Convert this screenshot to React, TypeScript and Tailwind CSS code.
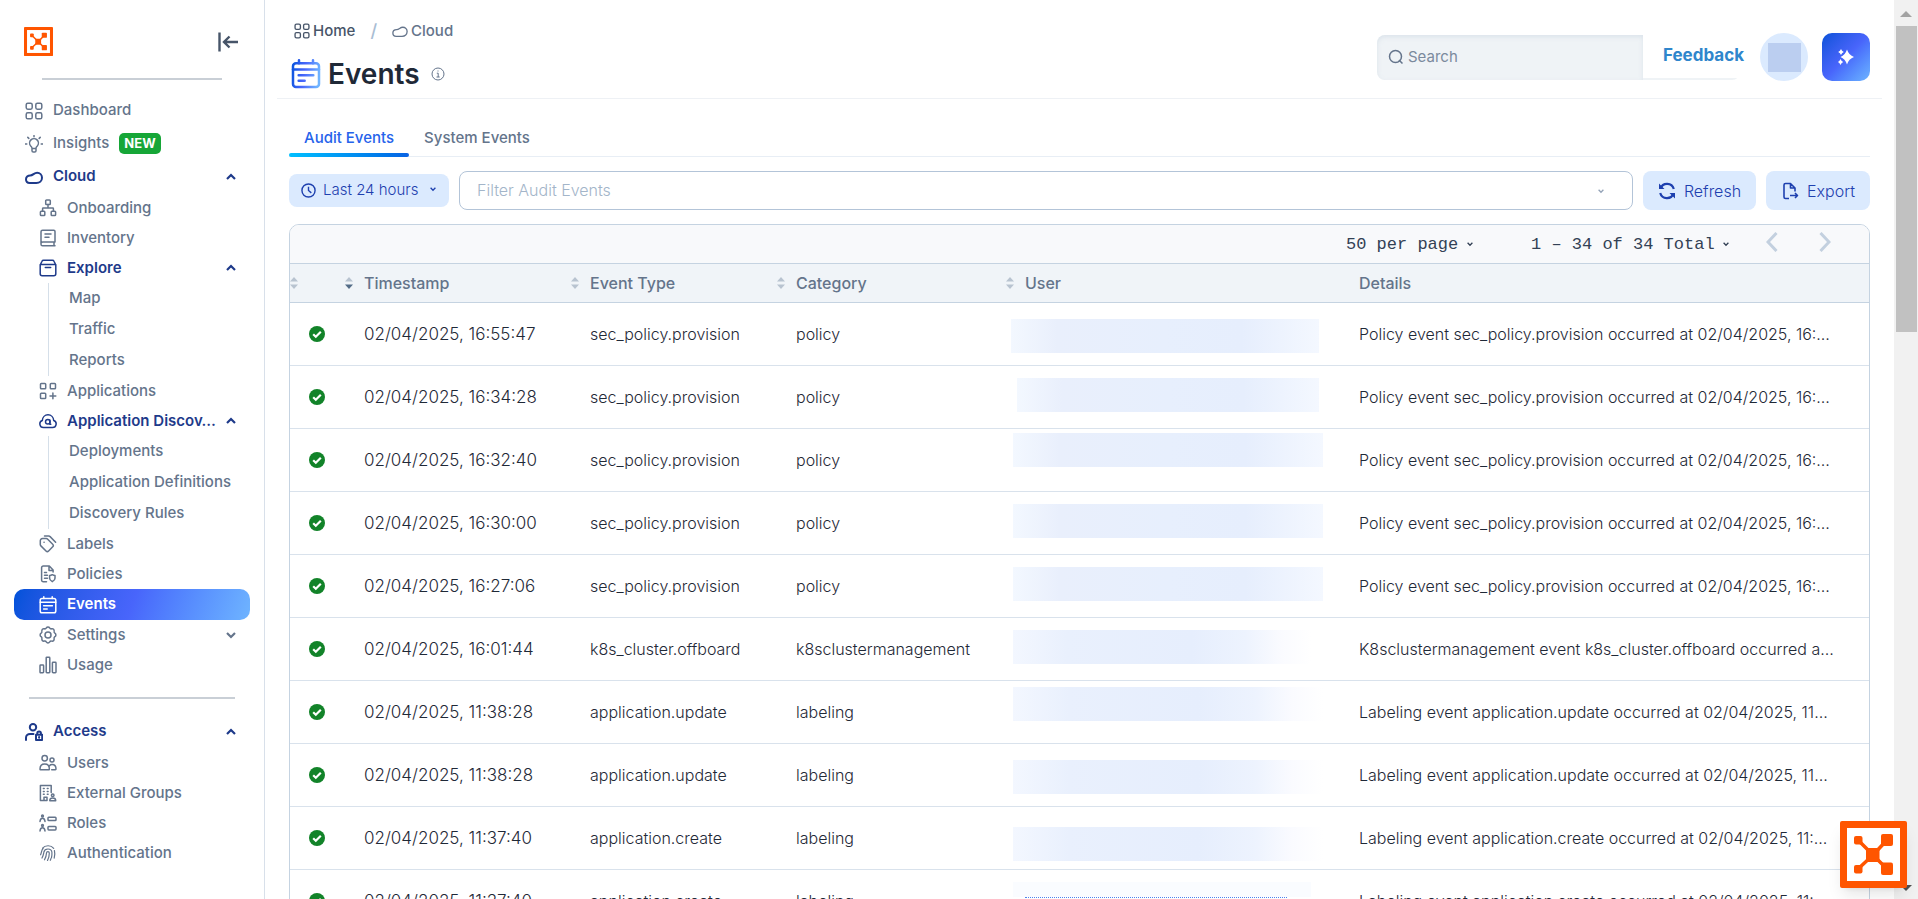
import { useState, type ReactNode } from "react";
import { clsx } from "clsx";

const ICONS: Record<string, ReactNode> = {
  dashboard: (
    <>
      <rect x="1.2" y="1.2" width="6" height="6" rx="1.6" />
      <rect x="10.8" y="1.2" width="6" height="6" rx="1.6" />
      <rect x="1.2" y="10.8" width="6" height="6" rx="1.6" />
      <rect x="10.8" y="10.8" width="6" height="6" rx="1.6" />
    </>
  ),
  insights: (
    <>
      <path d="M7 13.3c0-1.2-.6-1.6-1.3-2.3a4.4 4.4 0 1 1 6.6 0c-.7.7-1.3 1.1-1.3 2.3v2.4a1.3 1.3 0 0 1-1.3 1.3H8.3A1.3 1.3 0 0 1 7 15.7zM7 13.5h4" />
      <path d="M9 .6v1.2M2.8 2.4l1 1M15.2 2.4l-1 1M.4 9h1.4M16.2 9h1.4" />
    </>
  ),
  cloud: (
    <path d="M4.7 15h6.6c3.3 0 5.7-2.3 5.7-5.3 0-2.8-2.2-4.9-4.9-4.9-3.2 0-3.9 2.7-6.9 2.7C2.7 7.5 1 9 1 11.3 1 13.5 2.6 15 4.7 15z" />
  ),
  onboarding: (
    <>
      <rect x="6.7" y="1" width="4.6" height="4.6" rx=".8" />
      <rect x="1.4" y="12.2" width="4.4" height="4.4" rx=".8" />
      <rect x="12.2" y="12.2" width="4.4" height="4.4" rx=".8" />
      <path d="M9 5.6V9M3.6 12V9.6c0-.4.2-.6.6-.6h9.6c.4 0 .6.2.6.6V12" />
    </>
  ),
  inventory: (
    <>
      <path d="M16 13V2.4c0-.8-.5-1.2-1.2-1.2H3.6C2.6 1.2 2 1.8 2 2.8v12.4c0 1 .7 1.6 1.6 1.6H16M16 13H3.8C2.7 13 2 13.8 2 14.8M15 13v3.8" />
      <path d="M6 5h6M6 8.2h4" />
    </>
  ),
  explore: (
    <path d="M1.2 6 3 2.2c.3-.7.8-1 1.5-1h9c.7 0 1.2.3 1.5 1L16.8 6v8.8c0 1.2-.8 2-2 2H3.2c-1.2 0-2-.8-2-2zM1.2 5.6h15.6M6.3 8.5h5.4" />
  ),
  applications: (
    <>
      <rect x="1.5" y="1.5" width="5.2" height="5.2" rx=".8" />
      <rect x="11.3" y="1.5" width="5.2" height="5.2" rx=".8" />
      <rect x="1.5" y="11.3" width="5.2" height="5.2" rx=".8" />
      <path d="M13.9 11v5.8M11 13.9h5.8" />
    </>
  ),
  discovery: (
    <>
      <path d="M4.6 15.5h8.8a3.6 3.6 0 0 0 1.3-7c-.2-3.3-2.6-5.7-5.7-5.7S3.5 5.2 3.3 8.5a3.6 3.6 0 0 0 1.3 7z" />
      <circle cx="8.8" cy="9.7" r="2.3" />
      <path d="M10.8 8v4.3h1" />
    </>
  ),
  labels: (
    <>
      <path d="M1.3 5.8c0-1.4.8-2.2 2.2-2.2h3.8c.6 0 1 .2 1.4.6l5 5c.8.8.8 1.8 0 2.6L9.6 16c-.8.8-1.8.8-2.6 0L1.9 10.9c-.4-.4-.6-.8-.6-1.4zM5.5 1h4.2c.6 0 1 .2 1.4.6l5.5 5.6" />
      <path d="M5 7.3h.1" />
    </>
  ),
  policies: (
    <>
      <path d="M7.5 16.7H4.3c-1 0-1.7-.7-1.7-1.7V2.8c0-1 .7-1.7 1.7-1.7h6l3.8 3.900v2M10 1.3V5.4h4M5.5 7.4h2M5.5 10.3h3M5.5 13.3h3" />
      <path d="M10.6 10.6c1.2 0 1.8-.3 2.7-.9.9.6 1.5.9 2.7.9v2.7c0 1.6-1.2 2.6-2.7 3.4-1.5-.8-2.7-1.8-2.7-3.4z" />
    </>
  ),
  events: (
    <>
      <rect x="1.2" y="2.5" width="15.6" height="14.3" rx="1.8" />
      <path d="M1.2 6.3h15.6M4.8.8v1.7M13.2.8v1.7M4.6 9.7h8.8M4.6 13h3.6" />
    </>
  ),
  settings: (
    <>
      <path d="M7.3 2c.8-1.3 2.6-1.3 3.4 0 .4.7 1.2 1 2 .8 1.5-.4 2.7.9 2.4 2.4-.2.8.2 1.5.8 2 1.3.8 1.3 2.7 0 3.5-.6.5-1 1.2-.8 2 .3 1.5-.9 2.8-2.4 2.4-.8-.2-1.6.1-2 .8-.8 1.3-2.6 1.3-3.4 0-.4-.7-1.2-1-2-.8-1.5.4-2.7-.9-2.4-2.4.2-.8-.2-1.5-.8-2-1.3-.8-1.3-2.7 0-3.5.6-.5 1-1.2.8-2-.3-1.5.9-2.8 2.4-2.4.8.2 1.6-.1 2-.8z" />
      <circle cx="9" cy="9" r="3" />
    </>
  ),
  usage: (
    <>
      <rect x="1" y="9" width="3.6" height="7.8" rx=".7" />
      <rect x="7.2" y="1.2" width="3.6" height="15.6" rx=".7" />
      <rect x="13.4" y="6.2" width="3.6" height="10.6" rx=".7" />
    </>
  ),
  access: (
    <>
      <circle cx="8" cy="4.2" r="3.2" />
      <path d="M1 17v-2.2C1 12.6 2.8 11 5 11h3.5" />
      <path d="M11 11.7h6.2v5.2H11zM12.3 11.5v-1.2c0-2.4 3.6-2.4 3.6 0v1.2M14.1 14v.8" />
    </>
  ),
  users: (
    <>
      <circle cx="5.7" cy="4.2" r="2.7" />
      <circle cx="13" cy="6" r="2" />
      <path d="M1 15.2c0-3.2 1.8-5.2 4.7-5.2s4.7 2 4.7 5.2c0 .3-.2.5-.5.5H1.5c-.3 0-.5-.2-.5-.5zM10.5 11.8c.7-.9 1.6-1.2 2.6-1.2 2.4 0 3.9 1.7 3.9 4.4 0 .4-.2.7-.6.7h-3.7" />
    </>
  ),
  groups: (
    <>
      <path d="M8 16.6H1.4V1.4h10.8v7.2M5 16.5v-3.3h3v3.3M4.4 4.6h.8M4.4 7.4h.8M4.4 10.2h.8M8.3 4.6h.8M8.3 7.4h.8M8.3 10.2h.8" />
      <circle cx="13.7" cy="11.2" r="1.3" />
      <path d="M10.8 16.7c0-1.8 1-2.7 2.9-2.7s3 .9 3 2.7z" />
    </>
  ),
  roles: (
    <>
      <circle cx="3.5" cy="2" r=".9" />
      <path d="M1 7.5c.2-2.5 1-3.2 2.5-3.2S5.8 5 6 7.5" />
      <rect x="9" y="3.2" width="8" height="3.4" rx=".8" />
      <circle cx="3.5" cy="11.5" r=".9" />
      <path d="M1 17c.2-2.5 1-3.2 2.5-3.2S5.8 14.5 6 17" />
      <rect x="9" y="12.5" width="8" height="3.4" rx=".8" />
    </>
  ),
  authentication: (
    <g strokeWidth="1.2">
      <path d="M3.6 4.2C6 1 12 .8 14.7 4.3M1.6 10.8C2.8 8 2.4 5.8 4.2 4.6M3 14c1.7-3 1.6-4.6 1.9-6 .8-4 7.5-4 8 .2.1 1.6.1 3.4-.4 5.4M5.5 15.8c1.3-2.4 1.9-4.5 2-6.8.1-1.8 2.7-1.8 2.8.1.1 2.5-.7 5-1.8 7.4M11.3 16.3c.3-.7.6-1.4.8-2.2M15.4 6.5c.7 2.6.5 5-.2 7.6" />
    </g>
  ),
};

const Icon = ({
  name,
  className,
  stroke = "currentColor",
  bold = false,
}: {
  name: string;
  className?: string;
  stroke?: string;
  bold?: boolean;
}) => (
  <svg
    viewBox="0 0 18 18"
    fill="none"
    stroke={stroke}
    strokeWidth={bold ? 2 : 1.5}
    strokeLinecap="round"
    strokeLinejoin="round"
    aria-hidden="true"
    className={clsx("shrink-0", className)}
  >
    {ICONS[name]}
  </svg>
);

const Chevron = ({
  up = false,
  className,
}: {
  up?: boolean;
  className?: string;
}) => (
  <svg
    viewBox="0 0 10 10"
    fill="none"
    stroke="currentColor"
    strokeWidth="2.2"
    aria-hidden="true"
    className={clsx("shrink-0 pointer-events-none", className)}
  >
    <path d={up ? "M1 7l4-4 4 4" : "M1 3l4 4 4-4"} />
  </svg>
);

const Logo = ({ className }: { className?: string }) => (
  <svg viewBox="0 0 67 67" className={className} aria-hidden="true">
    <rect width="67" height="67" rx="2" fill="#ff5500" />
    <rect x="7" y="7" width="53" height="53" fill="#fff" />
    <path
      d="M18 19l15 15M47 19L33 34M18 48l15-14M47 48L33 34"
      stroke="#ff5500"
      strokeWidth="3.5"
    />
    <g fill="#ff5500">
      <rect x="26" y="27" width="13.5" height="14" rx="1" />
      <rect x="14" y="15" width="8.5" height="8.5" rx="2" />
      <rect x="41" y="13" width="12" height="12" rx="2" />
      <rect x="14" y="44" width="8.5" height="8.5" rx="2" />
      <rect x="41" y="41.5" width="12" height="12.5" rx="2" />
    </g>
  </svg>
);

const NavItem = ({
  name,
  icon,
  top = false,
  isOpen,
  isActive = false,
  badge,
}: {
  name: string;
  icon: string;
  top?: boolean;
  isOpen?: boolean;
  isActive?: boolean;
  badge?: string;
}) => (
  <a
    href="#"
    className={clsx(
      "flex items-center gap-[10px] rounded-[10px] pr-[14px]",
      top ? "h-[33px] pl-[11px]" : "pl-[25px]",
      !top && (isActive ? "h-[31px]" : "h-[30px]"),
      isActive &&
        "bg-linear-110 from-[#0052d9] via-[#4865fb] to-[#6fb4ff] text-white font-semibold",
      !isActive && isOpen && "text-[#1e3a8a] font-semibold",
      !isActive && !isOpen && "text-[#64748b] font-medium"
    )}
  >
    <Icon name={icon} bold={top && isOpen} className="size-[18px]" />
    <span className="whitespace-nowrap">{name}</span>
    {badge && (
      <span className="flex h-[21px] items-center rounded-[5px] bg-[#16a637] px-[5px] text-[13px] font-bold text-white">
        {badge}
      </span>
    )}
    {isOpen !== undefined && (
      <Chevron up={isOpen} className="ml-auto size-[10px]" />
    )}
  </a>
);

const NavChildren = ({ items }: { items: string[] }) => (
  <ul className="ml-[34px] border-l border-[#d5dfe9]">
    {items.map((item) => (
      <li key={item}>
        <a
          href="#"
          className="flex h-[31px] items-center whitespace-nowrap pl-[20px] font-medium text-[#64748b]"
        >
          {item}
        </a>
      </li>
    ))}
  </ul>
);

const Sidebar = () => (
  <nav className="w-[265px] shrink-0 border-r border-[#d8e0ea] px-[14px] text-[15px]">
    <div className="flex h-[78px] items-center justify-between pl-[10px] pr-[12px] pt-[5px]">
      <Logo className="size-[29px]" />
      <button aria-label="Collapse menu" className="text-[#475569]">
        <svg
          viewBox="0 0 20 20"
          fill="none"
          stroke="currentColor"
          strokeWidth="2.4"
          className="size-5"
        >
          <path d="M1.5 .5v19M6 10h14M11.5 4.5L6 10l5.5 5.5" />
        </svg>
      </button>
    </div>
    <hr className="mx-[28px] mb-[14px] h-[2px] border-0 bg-[#c9cfd6]" />
    <NavItem top icon="dashboard" name="Dashboard" />
    <NavItem top icon="insights" name="Insights" badge="NEW" />
    <NavItem top icon="cloud" name="Cloud" isOpen />
    <NavItem icon="onboarding" name="Onboarding" />
    <NavItem icon="inventory" name="Inventory" />
    <NavItem icon="explore" name="Explore" isOpen />
    <NavChildren items={["Map", "Traffic", "Reports"]} />
    <NavItem icon="applications" name="Applications" />
    <NavItem icon="discovery" name="Application Discov…" isOpen />
    <NavChildren
      items={["Deployments", "Application Definitions", "Discovery Rules"]}
    />
    <NavItem icon="labels" name="Labels" />
    <NavItem icon="policies" name="Policies" />
    <NavItem icon="events" name="Events" isActive />
    <NavItem icon="settings" name="Settings" isOpen={false} />
    <NavItem icon="usage" name="Usage" />
    <hr className="mx-[15px] mt-[17px] mb-4 h-[2px] border-0 bg-[#c9cfd6]" />
    <NavItem top icon="access" name="Access" isOpen />
    <NavItem icon="users" name="Users" />
    <NavItem icon="groups" name="External Groups" />
    <NavItem icon="roles" name="Roles" />
    <NavItem icon="authentication" name="Authentication" />
  </nav>
);

const Header = () => (
  <header className="flex justify-between border-b border-[#eef1f5] pr-[12px] pl-[14px] h-[99px]">
    <div>
      <div className="flex items-center pl-[3px] pt-[19px] text-[15px] leading-6 font-medium">
        <a href="#" className="flex items-center gap-[3px] text-[#475569]">
          <Icon name="dashboard" className="size-4" />
          Home
        </a>
        <span className="mx-[15px] text-lg leading-6 text-[#a9bdd3]">/</span>
        <a href="#" className="flex items-center gap-[3px] text-[#64748b]">
          <Icon name="cloud" className="size-4" />
          Cloud
        </a>
      </div>
      <div className="mt-[11px] flex h-10 items-center">
        <svg width="0" height="0" aria-hidden="true">
          <linearGradient
            id="title"
            gradientUnits="userSpaceOnUse"
            x1="0"
            y1="0"
            x2="18"
            y2="3"
          >
            <stop stopColor="#0052d9" />
            <stop offset=".5" stopColor="#4865fb" />
            <stop offset="1" stopColor="#6fb4ff" />
          </linearGradient>
        </svg>
        <Icon name="events" stroke="url(#title)" className="size-[30px]" />
        <h1 className="ml-[7px] text-[28px] font-semibold text-[#1f2937]">
          Events
        </h1>
        <button
          aria-label="About this page"
          className="ml-[11px] text-[#64748b]"
        >
          <svg
            viewBox="0 0 14 14"
            fill="none"
            stroke="currentColor"
            className="size-[14px]"
          >
            <circle cx="7" cy="7" r="6" />
            <path d="M5.8 6.2h1.4v3.8M5.5 10h3.2M6.5 4h1" />
          </svg>
        </button>
      </div>
    </div>

    <div className="flex h-12 items-center mt-[33px]">
      <div className="flex h-[45px] w-[363px] rounded-lg bg-[#eff3f6]">
        <label className="flex w-[266px] shrink-0 items-center gap-1 rounded-l-lg pl-[11px] text-[#64748b] inset-shadow-sm inset-shadow-slate-300/50">
          <svg
            viewBox="0 0 16 16"
            fill="none"
            stroke="currentColor"
            strokeWidth="1.5"
            className="size-4 shrink-0"
          >
            <circle cx="7.5" cy="7.5" r="6" />
            <path d="M11 11l3.5 3.5" />
          </svg>
          <input
            type="search"
            placeholder="Search"
            aria-label="Search"
            className="w-full bg-transparent text-[15px] outline-none placeholder:text-[#7b8a9d]"
          />
        </label>
        <div className="flex h-[43px] grow items-center bg-white pl-[20px]">
          <a href="#" className="text-[17px] font-bold text-[#2f86cc]">
            Feedback
          </a>
        </div>
      </div>
      <button
        aria-label="Account"
        className="ml-5 flex size-12 items-center justify-center rounded-full bg-[#dbeafe]"
      >
        <span className="h-[29px] w-[33px] bg-[#bbcef0]" />
      </button>
      <button
        aria-label="Assistant"
        className="ml-[14px] flex size-12 items-center justify-center rounded-[10px] bg-linear-135 from-[#0052d9] via-[#4865fb] to-[#6fb4ff] text-white"
      >
        <svg viewBox="0 0 16 16" fill="currentColor" className="size-4">
          <path d="M9 .5Q10.8 6.2 16 8 10.8 9.800 9 15.5 7.200 9.800 2.500 8 7.200 6.200 9 .5z" />
          <path d="M3 0q.7 2.200 2.800 3-2.100.8-2.800 3Q2.300 3.800.2 3 2.300 2.200 3 0zM2.500 10q.7 2.200 2.700 3-2 .8-2.700 3-.7-2.200-2.500-3Q1.800 12.200 2.500 10z" />
        </svg>
      </button>
    </div>
  </header>
);

const TABS = ["Audit Events", "System Events"];

const Tabs = () => {
  const [tab, setTab] = useState(TABS[0]);

  return (
    <div role="tablist" className="flex border-b border-[#e8eef5]">
      {TABS.map((name) => (
        <button
          key={name}
          role="tab"
          aria-selected={tab === name}
          onClick={() => setTab(name)}
          className={clsx(
            "-mb-px flex flex-col text-[15px] font-medium",
            tab === name ? "text-[#2563eb]" : "text-[#64748b]"
          )}
        >
          <span className="px-[15px] pb-[3px] leading-6">{name}</span>
          <span
            className={clsx(
              "h-1 w-full rounded-full",
              tab === name && "bg-linear-to-r from-[#00bfff] to-[#0b62e3]"
            )}
          />
        </button>
      ))}
    </div>
  );
};

const Filters = () => (
  <div className="mt-[14px] flex items-center gap-[10px] text-[16px] font-light text-[#1e40af]">
    <label className="flex h-[33px] w-[160px] shrink-0 items-center rounded-lg bg-[#dbeafe] pl-3">
      <svg
        viewBox="0 0 16 16"
        fill="none"
        stroke="currentColor"
        strokeWidth="1.5"
        className="size-[15px] shrink-0"
      >
        <circle cx="8" cy="8" r="7" />
        <path d="M8 4v4l3 2.5" />
      </svg>
      <select
        aria-label="Time range"
        className="ml-[7px] w-[98px] appearance-none text-[15px] outline-none"
      >
        <option>Last 24 hours</option>
      </select>
      <Chevron className="mb-[3px] ml-[9px] size-[6px]" />
    </label>
    <div className="flex h-[39px] grow items-center rounded-lg border border-[#b3c4d8] pr-[28px] pl-[17px]">
      <input
        type="text"
        aria-label="Filter Audit Events"
        placeholder="Filter Audit Events"
        className="grow pb-[2px] text-[16px] outline-none placeholder:text-[#a3b5c9]"
      />
      <button aria-label="Show filters" className="text-[#94a3b8]">
        <Chevron className="size-[6px]" />
      </button>
    </div>
    <button className="flex h-[39px] w-[113px] items-center justify-center gap-2 rounded-lg bg-[#dbeafe]">
      <svg
        viewBox="0 0 18 18"
        fill="none"
        stroke="currentColor"
        strokeWidth="2.2"
        className="size-[18px]"
      >
        <path d="M2.5 6.5A7 7 0 0 1 15.8 7M15.5 11.5A7 7 0 0 1 2.2 11" />
        <path
          d="M1 1.5V7h5.5zM17 16.5V11h-5.5z"
          fill="currentColor"
          stroke="none"
        />
      </svg>
      Refresh
    </button>
    <button className="flex h-[39px] w-[104px] items-center justify-center gap-2 rounded-lg bg-[#dbeafe]">
      <svg
        viewBox="0 0 18 18"
        fill="none"
        stroke="currentColor"
        strokeWidth="1.6"
        strokeLinejoin="round"
        className="size-[18px]"
      >
        <path d="M8 16.5H4.5c-1 0-1.5-.6-1.5-1.5V3c0-1 .6-1.5 1.5-1.5h5L14 6v3.5M9.5 1.5V6H14M9 13.5h7.5M14 11l2.5 2.5L14 16" />
      </svg>
      Export
    </button>
  </div>
);

const PageArrow = ({ next = false }: { next?: boolean }) => (
  <button
    aria-label={next ? "Next page" : "Previous page"}
    className="text-[#c3d0df]"
  >
    <svg
      viewBox="0 0 12 20"
      fill="none"
      stroke="currentColor"
      strokeWidth="3"
      className="h-5 w-3"
    >
      <path d={next ? "M1.5 1l8.5 9-8.5 9" : "M10.5 1L2 10l8.5 9"} />
    </svg>
  </button>
);

const Pager = () => (
  <div className="flex h-[39px] items-center justify-end border-b border-[#c5d3e1] bg-[#f8f9fb] pr-[38px] font-['Liberation_Mono',monospace] text-[17px] text-[#334155]">
    <label className="flex items-center gap-[8px] pt-[2px]">
      <select
        aria-label="Page size"
        className="w-[113px] appearance-none outline-none"
      >
        <option>50 per page</option>
      </select>
      <Chevron className="mb-[3px] size-[6px]" />
    </label>
    <label className="ml-[58px] flex items-center gap-[8px] pt-[2px]">
      <select
        aria-label="Page"
        className="w-[184px] appearance-none outline-none"
      >
        <option>1 – 34 of 34 Total</option>
      </select>
      <Chevron className="mb-[3px] size-[6px]" />
    </label>
    <div className="mb-1 ml-[37px] flex gap-[41px]">
      <PageArrow />
      <PageArrow next />
    </div>
  </div>
);

const Sort = ({ desc = false }: { desc?: boolean }) => (
  <svg viewBox="0 0 8 12" className="h-3 w-2 shrink-0" aria-hidden="true">
    <path d="M0 4.5L4 0l4 4.5z" fill="#b8c3d0" />
    <path d="M0 7.5L4 12l4-4.5z" fill={desc ? "#536c87" : "#b8c3d0"} />
  </svg>
);

const COLUMNS = [
  { name: "", width: "w-[54px]", label: "Status" },
  { name: "Timestamp", width: "w-[226px]" },
  { name: "Event Type", width: "w-[206px]" },
  { name: "Category", width: "w-[229px]" },
  { name: "User", width: "w-[334px]" },
  { name: "Details", width: "w-auto" },
];

const POLICY = {
  type: "sec_policy.provision",
  category: "policy",
  details: "Policy event sec_policy.provision occurred at 02/04/2025, 16:…",
};

const UPDATE = {
  type: "application.update",
  category: "labeling",
  details: "Labeling event application.update occurred at 02/04/2025, 11…",
};

const CREATE = {
  type: "application.create",
  category: "labeling",
  details: "Labeling event application.create occurred at 02/04/2025, 11:…",
};

type Row = typeof POLICY & {
  time: string;
  // place of the bar that hides the user name
  mask: string;
  fade?: boolean;
  faint?: boolean;
};

const ROWS: Row[] = [
  { ...POLICY, time: "16:55:47", mask: "mt-4 ml-1.5 mr-5" },
  { ...POLICY, time: "16:34:28", mask: "mt-3 ml-3 mr-5" },
  { ...POLICY, time: "16:32:40", mask: "mt-1 ml-2 mr-4" },
  { ...POLICY, time: "16:30:00", mask: "mt-3 ml-2 mr-4" },
  { ...POLICY, time: "16:27:06", mask: "mt-3 ml-2 mr-4" },
  {
    time: "16:01:44",
    type: "k8s_cluster.offboard",
    category: "k8sclustermanagement",
    details: "K8sclustermanagement event k8s_cluster.offboard occurred a…",
    mask: "mt-3 ml-2 mr-7",
    fade: true,
  },
  { ...UPDATE, time: "11:38:28", mask: "mt-1.5 ml-2 mr-4", fade: true },
  { ...UPDATE, time: "11:38:28", mask: "mt-4 ml-2 mr-4", fade: true },
  { ...CREATE, time: "11:37:40", mask: "mt-5 ml-2 mr-4", fade: true },
  { ...CREATE, time: "11:37:40", mask: "mt-3 ml-2 mr-7", faint: true },
];

const UserMask = ({ row }: { row: Row }) => {
  if (row.faint) {
    return (
      <div className={clsx("h-[15px] bg-[#fafcff]", row.mask)}>
        <div className="mr-6 ml-3 h-4 border-b border-dotted border-[#4f83ee]" />
      </div>
    );
  }

  return (
    <div
      className={clsx(
        "h-[34px]",
        row.mask,
        row.fade
          ? "bg-[linear-gradient(90deg,#f3f7ff,#e9f0fd_18%,#e6eefd_60%,#edf3fe_78%,#fafbff_90%,#fff)]"
          : "bg-[linear-gradient(90deg,#f3f8ff,#e9effc_15%,#e7effd_50%,#e6eefd_75%,#f4f8ff)]"
      )}
    />
  );
};

const EventsTable = () => (
  <table className="w-full table-fixed text-left">
    <thead className="bg-[#f0f4f8] text-[#64748b]">
      <tr className="h-[38px] border-b border-[#c5d3e1]">
        {COLUMNS.map((column) => (
          <th
            key={column.name}
            aria-label={column.label}
            className={clsx("p-0 text-[16px] font-medium", column.width)}
          >
            <div
              className={clsx(
                "flex items-center gap-[11px]",
                column.name === "Details" && "pl-5",
                column.name !== "Details" && column.name !== "" && "pl-px"
              )}
            >
              {column.name !== "Details" && (
                <Sort desc={column.name === "Timestamp"} />
              )}
              {column.name}
            </div>
          </th>
        ))}
      </tr>
    </thead>
    <tbody className="text-[16px] leading-6 font-light text-[#1f2937]">
      {ROWS.map((row, index) => (
        <tr key={index} className="h-[63px] border-b border-[#d9e2ec]">
          <td className="p-0 pl-[19px]">
            <svg viewBox="0 0 16 16" className="size-4" aria-label="Success">
              <circle cx="8" cy="8" r="8" fill="#128329" />
              <path
                d="M4.2 8.3l2.6 2.5 5-5"
                fill="none"
                stroke="#fff"
                strokeWidth="2.2"
              />
            </svg>
          </td>
          <td className="p-0 pl-5 text-[17px]">02/04/2025, {row.time}</td>
          <td className="p-0 pl-5">{row.type}</td>
          <td className="p-0 pl-5">{row.category}</td>
          <td className="p-0 align-top">
            <UserMask row={row} />
          </td>
          <td className="p-0 pl-5 whitespace-nowrap">{row.details}</td>
        </tr>
      ))}
    </tbody>
  </table>
);

const Scrollbar = () => (
  <div className="flex w-6 shrink-0 flex-col items-center justify-between bg-[#f1f1f1] pb-2">
    <div className="flex w-full flex-col items-center">
      <span className="mt-[11px] mb-[9px] border-x-[6px] border-b-[6px] border-x-transparent border-b-[#a3a3a3]" />
      <span className="h-[306px] w-[21px] bg-[#c1c1c1]" />
    </div>
    <span className="border-x-[6px] border-t-[6px] border-x-transparent border-t-[#505050]" />
  </div>
);

export default function App() {
  return (
    <div className="flex h-screen overflow-hidden bg-white font-[Inter,sans-serif]">
      <Sidebar />
      <main className="min-w-0 grow pr-3 pl-3">
        <Header />
        <div className="pt-[27px] pr-3 pl-3">
          <Tabs />
          <Filters />
          <section className="mt-[14px] overflow-hidden rounded-t-[10px] border border-[#c5d3e1]">
            <Pager />
            <EventsTable />
          </section>
        </div>
      </main>
      <Scrollbar />
      <button
        aria-label="Open help"
        className="fixed right-[11px] bottom-[11px] shadow-lg"
      >
        <Logo className="size-[67px]" />
      </button>
    </div>
  );
}
